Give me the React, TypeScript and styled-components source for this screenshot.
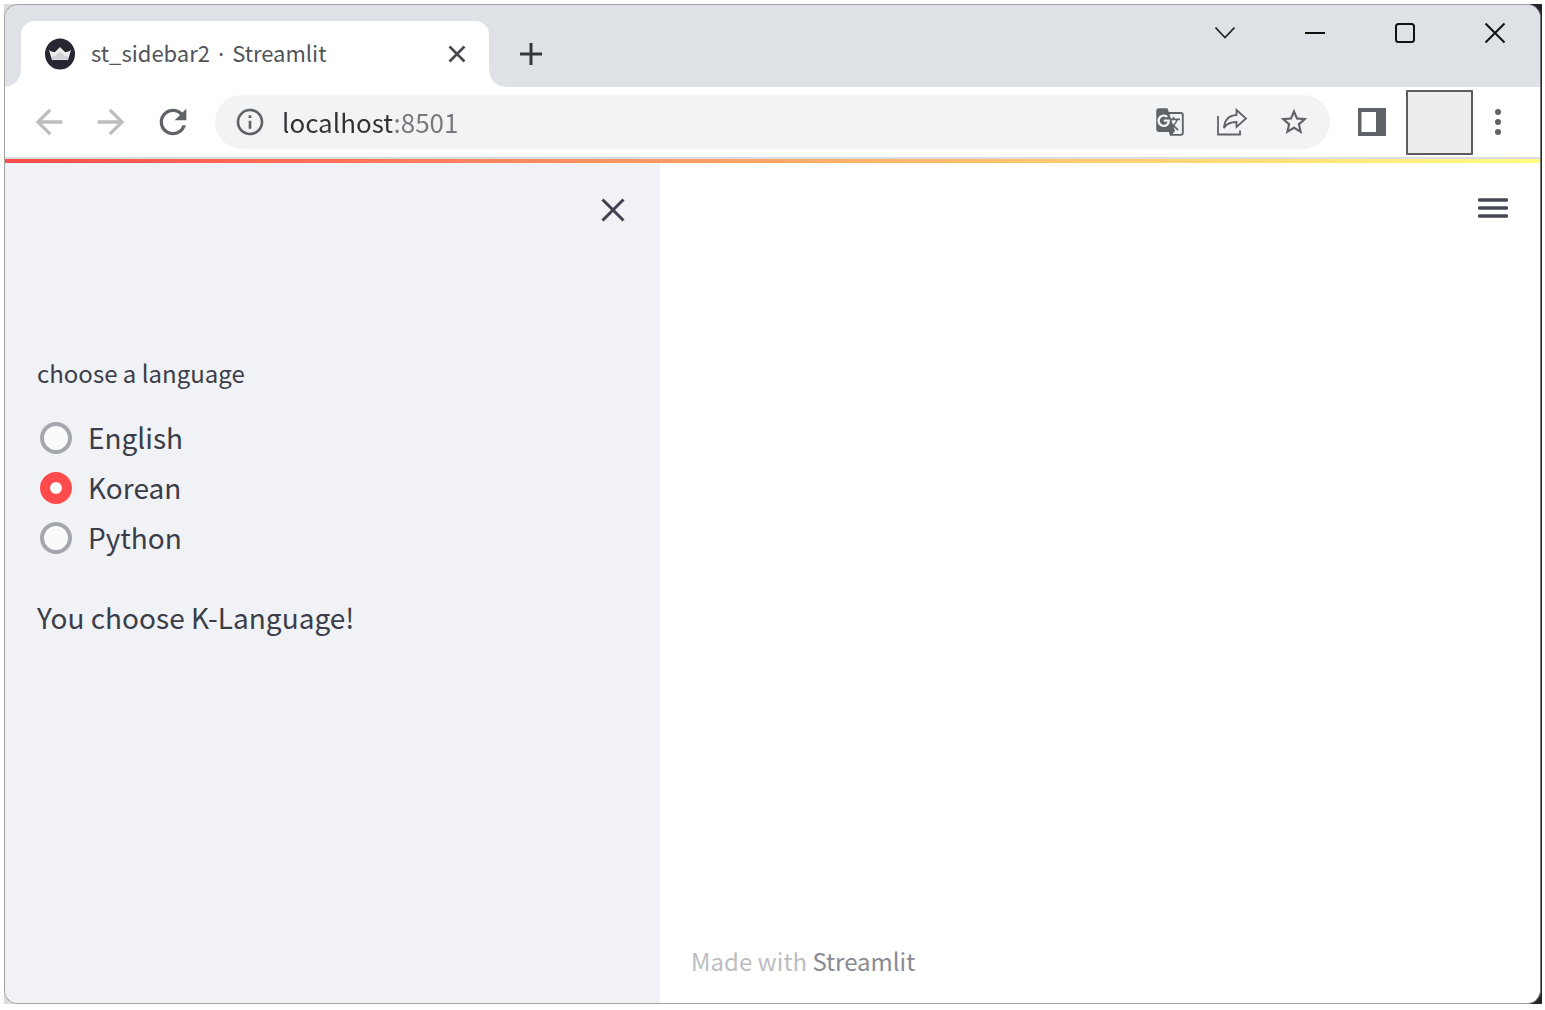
import React, { useState } from "react";
import styled, { createGlobalStyle } from "styled-components";
import { MdArrowBack, MdArrowForward, MdGTranslate, MdInfoOutline, MdRefresh, MdStarBorder } from "react-icons/md";

const GlobalStyle = createGlobalStyle`
  * { box-sizing: border-box; }
  body { margin: 0; background: #fff; font-family: "Noto Sans CJK KR", "Noto Sans", sans-serif; }
  button { font: inherit; }
`;

const Desktop = styled.div`
  display: flex;
  min-height: 100vh;
  padding: 4px 3px 6px 4px;
`;

const Backdrop = styled.div`
  display: flex;
  flex: 1;
  padding-right: 1px;
  background: linear-gradient(to right, #dcdcdc 75%, #24242a 76%);
`;

const Window = styled.div`
  display: flex;
  flex: 1;
  flex-direction: column;
  overflow: hidden;
  border: 1px solid #a2a2a2;
  border-right-color: #77777a;
  border-radius: 14px;
  background: #fff;
`;

const TitleBar = styled.header`
  display: flex;
  height: 82px;
  padding-left: 16px;
  background: #dee1e6;
`;

const Tab = styled.div`
  position: relative;
  display: flex;
  align-items: center;
  align-self: flex-end;
  width: 468px;
  height: 66px;
  padding: 0 16px 0 24px;
  border-radius: 14px 14px 0 0;
  background: #fff;

  &::before,
  &::after {
    content: "";
    position: absolute;
    bottom: 0;
    width: 16px;
    height: 16px;
  }
  &::before {
    right: 100%;
    background: radial-gradient(circle at 0 0, transparent 15px, #fff 16px);
  }
  &::after {
    left: 100%;
    background: radial-gradient(circle at 100% 0, transparent 15px, #fff 16px);
  }
`;

const TabTitle = styled.span`
  flex: 1;
  margin-left: 16px;
  padding-bottom: 4px;
  color: #505458;
  font-size: 22px;
  line-height: 32px;
  white-space: nowrap;
`;

const IconButton = styled.button<{ $size?: number; $tone?: string }>`
  display: flex;
  flex: none;
  align-items: center;
  justify-content: center;
  width: ${(p) => p.$size ?? 32}px;
  height: ${(p) => p.$size ?? 32}px;
  padding: 0;
  border: 0;
  background: none;
  color: ${(p) => p.$tone ?? "#5f6368"};
`;

const NewTab = styled(IconButton)`
  align-self: flex-end;
  margin: 0 0 17px 26px;
`;

const WindowControls = styled.div`
  display: flex;
  align-items: flex-start;
  margin-left: auto;
`;

const WindowButton = styled(IconButton)`
  width: 90px;
  height: 56px;
`;

const Toolbar = styled.nav`
  display: flex;
  align-items: center;
  height: 72px;
  padding: 0 26px 0 24px;
  border-bottom: 2px solid #dadce0;
`;

const History = styled.div`
  display: flex;
  gap: 22px;
`;

const AddressBar = styled.div`
  display: flex;
  flex: 1;
  align-items: center;
  gap: 16px;
  height: 54px;
  margin-left: 22px;
  padding: 0 20px 0 19px;
  border-radius: 27px;
  background: #f1f3f4;
`;

const Address = styled.input`
  flex: 1;
  min-width: 0;
  height: 40px;
  padding: 0 0 2px;
  border: 0;
  outline: 0;
  background: linear-gradient(to right, #303336 112px, #75797d 112px);
  background-clip: text;
  color: #303336;
  -webkit-text-fill-color: transparent;
  font: 26px/38px "Noto Sans CJK KR", "Noto Sans", sans-serif;
`;

const AddressActions = styled.div`
  display: flex;
  gap: 30px;
`;

const ToolbarEnd = styled.div`
  display: flex;
  align-items: center;
  margin-left: 26px;
`;

const Profile = styled.button`
  width: 67px;
  height: 65px;
  margin: 0 9px 0 18px;
  border: 2px solid #5c5c5c;
  border-radius: 1px;
  background: #ededed;
`;

const Decoration = styled.div`
  height: 4px;
  background: linear-gradient(to right, #ff4b4b, #ffa868 50%, #fffd80);
`;

const Page = styled.div`
  display: flex;
  flex: 1;
`;

const Sidebar = styled.aside`
  display: flex;
  flex: 0 0 655px;
  flex-direction: column;
  padding: 31px 31px 31px 32px;
  background: #f0f2f6;
  color: #3b3d49;
`;

const CloseRow = styled.div`
  display: flex;
  justify-content: flex-end;
  margin-bottom: 131px;
`;

const LanguageGroup = styled.fieldset`
  margin: 0;
  padding: 0;
  border: 0;
`;

const GroupLabel = styled.legend`
  margin-bottom: 24px;
  padding: 0;
  font-size: 24px;
  line-height: 32px;
`;

const Option = styled.label`
  display: flex;
  align-items: center;
  gap: 16px;
  height: 50px;
  padding-left: 3px;
  font-size: 28px;
  line-height: 40px;
`;

const OptionText = styled.span`
  padding-bottom: 2px;
`;

const Radio = styled.input`
  flex: none;
  width: 32px;
  height: 32px;
  margin: 0;
  appearance: none;
  border: 4px solid #a5a7af;
  border-radius: 50%;
  background: #fafafc;

  &:checked {
    border: 10px solid #ff4b4b;
    background: #fff;
  }
`;

const Message = styled.p`
  margin: 34px 0 0;
  font-size: 28px;
  line-height: 40px;
`;

const Main = styled.main`
  display: flex;
  flex: 1;
  flex-direction: column;
  justify-content: space-between;
  padding: 29px 31px 26px 31px;
`;

const MenuRow = styled.div`
  display: flex;
  justify-content: flex-end;
`;

const Footer = styled.footer`
  color: #bcbdc1;
  font-size: 24px;
  line-height: 32px;
`;

const FooterLink = styled.a`
  color: #898a92;
  text-decoration: none;
`;

const CrownIcon = () => (
  <svg width="30" height="32" viewBox="0 0 30 32" aria-hidden="true">
    <ellipse cx="15" cy="16" rx="15" ry="15.5" fill="#262730" />
    <path d="M4 12q3 2.500 6 2l5-5 5 5q3 .5 6-2L23 22H7z" fill="#ececec" />
    <path d="M6.500 18.500l4-1 4.500-3.500 4.500 3.500 4 1-.7 3h-15.600z" fill="#d2d2d6" />
  </svg>
);

const Cross = ({ size, width }: { size: number; width: number }) => (
  <svg width={size} height={size} viewBox={`0 0 ${size} ${size}`} aria-hidden="true">
    <path
      d={`M1.500 1.500L${size - 1.5} ${size - 1.5}M${size - 1.5} 1.500L1.500 ${size - 1.5}`}
      stroke="currentColor"
      strokeWidth={width}
    />
  </svg>
);

const PlusIcon = () => (
  <svg width="24" height="24" viewBox="0 0 24 24" aria-hidden="true">
    <path d="M12 1v22M1 12h22" stroke="currentColor" strokeWidth="3" />
  </svg>
);

const ChevronIcon = () => (
  <svg width="20" height="12" viewBox="0 0 20 12" fill="none" aria-hidden="true">
    <path d="M.5 .5L10 10.500 19.500 .5" stroke="currentColor" strokeWidth="1.600" />
  </svg>
);

const MinimizeIcon = () => (
  <svg width="20" height="2" viewBox="0 0 20 2" aria-hidden="true">
    <path d="M0 1h20" stroke="currentColor" strokeWidth="2" />
  </svg>
);

const MaximizeIcon = () => (
  <svg width="20" height="20" viewBox="0 0 20 20" fill="none" aria-hidden="true">
    <rect x="1" y="1" width="18" height="18" rx="2.500" stroke="currentColor" strokeWidth="2" />
  </svg>
);

const ShareIcon = () => (
  <svg width="32" height="30" viewBox="0 0 32 30" fill="none" stroke="currentColor" aria-hidden="true">
    <path d="M2 9v18.500h22v-4" strokeWidth="1.800" />
    <path d="M20.500 3l9.500 8.500-9.500 8.500v-5c-6 0-10 1.500-12.500 6C8.500 13 13 8.500 20.500 8z" strokeWidth="1.800" />
  </svg>
);

const SidePanelIcon = () => (
  <svg width="28" height="28" viewBox="0 0 28 28" aria-hidden="true">
    <path d="M0 0h28v28H0zM3.500 4v20h14.500V4z" fill="currentColor" fillRule="evenodd" />
  </svg>
);

const DotsIcon = () => (
  <svg width="6" height="26" viewBox="0 0 6 26" fill="currentColor" aria-hidden="true">
    <circle cx="3" cy="3" r="3" />
    <circle cx="3" cy="13" r="3" />
    <circle cx="3" cy="23" r="3" />
  </svg>
);

const MenuIcon = () => (
  <svg width="30" height="20" viewBox="0 0 30 20" aria-hidden="true">
    <path d="M1.500 2h27M1.500 10h27M1.500 18h27" stroke="currentColor" strokeWidth="3.400" strokeLinecap="round" />
  </svg>
);

const languages = ["English", "Korean", "Python"];
const messages: Record<string, string> = {
  English: "You choose English!",
  Korean: "You choose K-Language!",
  Python: "You choose Python!",
};

export default function App() {
  const [language, setLanguage] = useState("Korean");
  const [address, setAddress] = useState("localhost:8501");

  return (
    <Desktop>
      <GlobalStyle />
      <Backdrop>
        <Window>
          <TitleBar>
            <Tab>
              <CrownIcon />
              <TabTitle>st_sidebar2 · Streamlit</TabTitle>
              <IconButton aria-label="Close tab" $tone="#45494d"><Cross size={18} width={2.6} /></IconButton>
            </Tab>
            <NewTab aria-label="New tab" $tone="#34373b"><PlusIcon /></NewTab>
            <WindowControls>
              <WindowButton aria-label="Search tabs" $tone="#222"><ChevronIcon /></WindowButton>
              <WindowButton aria-label="Minimize" $tone="#111"><MinimizeIcon /></WindowButton>
              <WindowButton aria-label="Maximize" $tone="#111"><MaximizeIcon /></WindowButton>
              <WindowButton aria-label="Close" $tone="#111"><Cross size={22} width={2} /></WindowButton>
            </WindowControls>
          </TitleBar>
          <Toolbar>
            <History>
              <IconButton aria-label="Back" $size={40} $tone="#bbbdbf"><MdArrowBack size={40} /></IconButton>
              <IconButton aria-label="Forward" $size={40} $tone="#bbbdbf"><MdArrowForward size={40} /></IconButton>
              <IconButton aria-label="Reload" $size={40}><MdRefresh size={40} /></IconButton>
            </History>
            <AddressBar>
              <IconButton aria-label="Site information"><MdInfoOutline size={32} /></IconButton>
              <Address aria-label="Address" value={address} onChange={(e) => setAddress(e.target.value)} />
              <AddressActions>
                <IconButton aria-label="Translate"><MdGTranslate size={30} /></IconButton>
                <IconButton aria-label="Share"><ShareIcon /></IconButton>
                <IconButton aria-label="Bookmark"><MdStarBorder size={34} /></IconButton>
              </AddressActions>
            </AddressBar>
            <ToolbarEnd>
              <IconButton aria-label="Side panel"><SidePanelIcon /></IconButton>
              <Profile aria-label="Profile" />
              <IconButton aria-label="Browser menu"><DotsIcon /></IconButton>
            </ToolbarEnd>
          </Toolbar>
          <Decoration />
          <Page>
            <Sidebar>
              <CloseRow>
                <IconButton aria-label="Close sidebar" $tone="#3f424e"><Cross size={24} width={3} /></IconButton>
              </CloseRow>
              <LanguageGroup>
                <GroupLabel>choose a language</GroupLabel>
                {languages.map((name) => (
                  <Option key={name}>
                    <Radio
                      type="radio"
                      name="language"
                      value={name}
                      checked={language === name}
                      onChange={() => setLanguage(name)}
                    />
                    <OptionText>{name}</OptionText>
                  </Option>
                ))}
              </LanguageGroup>
              <Message>{messages[language]}</Message>
            </Sidebar>
            <Main>
              <MenuRow>
                <IconButton aria-label="Main menu" $tone="#464955"><MenuIcon /></IconButton>
              </MenuRow>
              <Footer>
                Made with <FooterLink href="#streamlit">Streamlit</FooterLink>
              </Footer>
            </Main>
          </Page>
        </Window>
      </Backdrop>
    </Desktop>
  );
}
